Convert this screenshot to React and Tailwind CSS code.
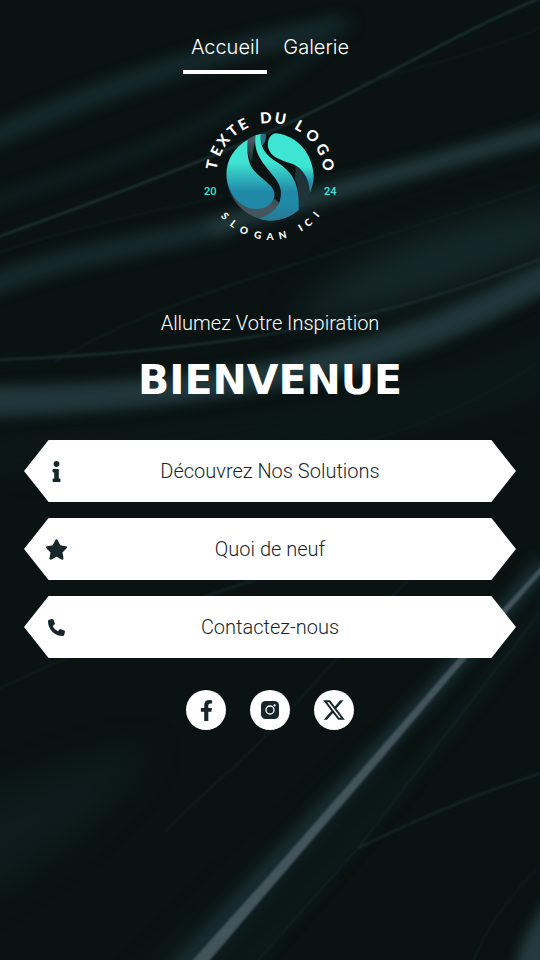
import { FaFacebookF, FaInfo } from 'react-icons/fa';
import { FaPhone, FaStar, FaXTwitter } from 'react-icons/fa6';

const navItems = [
  { label: 'Accueil', href: '#accueil', active: true },
  { label: 'Galerie', href: '#galerie', active: false },
];

const links = [
  { label: 'Découvrez Nos Solutions', href: '#solutions', icon: <FaInfo size={21} /> },
  { label: 'Quoi de neuf', href: '#nouveautes', icon: <FaStar size={23} /> },
  { label: 'Contactez-nous', href: '#contact', icon: <FaPhone size={17} /> },
];

function InstagramIcon() {
  return (
    <svg width="18" height="18" viewBox="0 0 18 18" aria-hidden="true">
      <rect width="18" height="18" rx="4.5" fill="currentColor" />
      <circle cx="9" cy="9" r="4" fill="none" stroke="#fff" strokeWidth="1.3" />
      <circle cx="13.6" cy="4.4" r="1.1" fill="#fff" />
    </svg>
  );
}

const socials = [
  { label: 'Facebook', href: '#facebook', icon: <FaFacebookF size={21} /> },
  { label: 'Instagram', href: '#instagram', icon: <InstagramIcon /> },
  { label: 'X', href: '#x', icon: <FaXTwitter size={24} /> },
];

// Advance widths in em for the letters used around the emblem
const glyphWidths = {
  A: 0.7, C: 0.66, D: 0.76, E: 0.59, G: 0.71, I: 0.31, L: 0.49,
  N: 0.75, O: 0.81, S: 0.57, T: 0.6, U: 0.73, X: 0.69, ' ': 0.2,
};

// Puts every glyph on a circle; angles are degrees from the vertical axis
function CircleText({ text, angles, radius, size, bottom }) {
  const xs = [];
  const ys = [];
  const turns = [];
  [...text].forEach((char, i) => {
    const a = (angles[i] * Math.PI) / 180;
    const turn = bottom ? -angles[i] : angles[i];
    const t = (turn * Math.PI) / 180;
    const half = (glyphWidths[char] * size) / 2;
    const y = bottom ? radius * Math.cos(a) : -radius * Math.cos(a);
    xs.push((80 + radius * Math.sin(a) - half * Math.cos(t)).toFixed(2));
    ys.push((77 + y - half * Math.sin(t)).toFixed(2));
    turns.push(turn);
  });
  return (
    <text
      x={xs.join(' ')}
      y={ys.join(' ')}
      rotate={turns.join(' ')}
      fontSize={size}
      className="fill-white font-[Lato,sans-serif] font-black"
    >
      {text}
    </text>
  );
}

function Logo() {
  return (
    <svg width="160" height="150" viewBox="0 0 160 150" role="img" aria-label="Texte du logo">
      <defs>
        <linearGradient id="lobe" gradientUnits="userSpaceOnUse" x1="0" y1="95" x2="0" y2="185">
          <stop offset="0" stopColor="#3fe5d3" />
          <stop offset="1" stopColor="#2089a8" />
        </linearGradient>
        <linearGradient id="lobeRight" gradientUnits="userSpaceOnUse" x1="0" y1="110" x2="0" y2="160">
          <stop offset="0" stopColor="#3fe5d3" />
          <stop offset="1" stopColor="#2089a8" />
        </linearGradient>
        <linearGradient id="ribbon" gradientUnits="userSpaceOnUse" x1="0" y1="30" x2="0" y2="100">
          <stop offset="0" stopColor="#465a61" />
          <stop offset="1" stopColor="#16272b" />
        </linearGradient>
        <linearGradient id="rim" gradientUnits="userSpaceOnUse" x1="0" y1="150" x2="0" y2="235">
          <stop offset="0" stopColor="#22373b" />
          <stop offset="1" stopColor="#46565d" />
        </linearGradient>
        <linearGradient id="stem" gradientUnits="userSpaceOnUse" x1="0" y1="225" x2="0" y2="272">
          <stop offset="0" stopColor="#2089a8" />
          <stop offset="1" stopColor="#2a7690" />
        </linearGradient>
      </defs>
      <g transform="translate(35 30) scale(0.3333)">
        <path d="M4 140 C8 195 45 250 105 266 C145 254 166 232 167 190 C160 165 148 190 140 212 C100 245 30 225 10 150 Z" fill="url(#rim)" />
        <path d="M150 182 C158 165 166 172 168 194 L164 220 C155 212 150 206 147 206 Z" fill="#0c1718" />
        <path d="M67 30 C76 22 86 17 96 14 C88 45 82 65 82 98 C70 82 66 62 67 30 Z" fill="url(#ribbon)" />
        <path d="M68 29 C20 56 -4 105 7 157 C18 203 52 237 93 237 C128 237 150 216 148 190 C146 163 110 151 84 118 C67 94 66 65 68 29 Z" fill="url(#lobe)" />
        <path d="M106 12 L121 11 C125 23 121 38 111 48 Z" fill="#2e6e86" />
        <path d="M92 16 L107 12 C104 50 120 76 160 99 C203 128 225 163 221 240 C187 267 147 279 103 266 C151 250 168 224 168 188 C167 151 130 127 107 88 C92 64 88 40 92 16 Z" fill="url(#lobe)" />
        <path d="M221 225 L221 240 C187 267 147 279 103 266 C130 257 147 245 157 228 Z" fill="url(#stem)" />
        <path d="M212 103 C240 115 255 145 258 160 L252 192 C246 212 234 229 221 238 C226 195 216 160 210 146 Z" fill="#203338" />
        <path d="M153 10 C218 17 264 72 266 139 C266 158 261 174 254 190 C256 158 240 119 205 103 C174 92 142 86 131 58 C124 36 133 12 153 10 Z" fill="url(#lobeRight)" />
      </g>
      <CircleText
        text="TEXTE DU LOGO"
        angles={[-78, -64, -52, -39, -27, -15, -4, 10, 20, 30, 46, 62, 78]}
        radius={54}
        size={15}
      />
      <CircleText
        text="SLOGAN ICI"
        angles={[-49, -38, -26, -12, 0, 12, 22, 31, 40, 51]}
        radius={63}
        size={10}
        bottom
      />
      <text x="14" y="95" fontSize="11" className="fill-[#3fe5d3] font-[Roboto,sans-serif] font-medium">20</text>
      <text x="134" y="95" fontSize="11" className="fill-[#3fe5d3] font-[Roboto,sans-serif] font-medium">24</text>
    </svg>
  );
}

function SilkBackground() {
  return (
    <svg
      className="absolute inset-0 size-full"
      viewBox="0 0 540 960"
      preserveAspectRatio="xMidYMid slice"
      fill="none"
      aria-hidden="true"
    >
      <defs>
        <filter id="blur1" x="-20%" y="-20%" width="140%" height="140%" colorInterpolationFilters="sRGB">
          <feGaussianBlur stdDeviation="0.8" />
        </filter>
        <filter id="blur6" x="-20%" y="-50%" width="140%" height="200%" colorInterpolationFilters="sRGB">
          <feGaussianBlur stdDeviation="6" />
        </filter>
        <filter id="blur14" x="-30%" y="-50%" width="160%" height="200%" colorInterpolationFilters="sRGB">
          <feGaussianBlur stdDeviation="16" />
        </filter>
      </defs>

      <g filter="url(#blur14)">
        <path d="M290 325 C340 265 430 220 580 200 L580 235 C490 275 400 310 290 325 Z" fill="#15272a" />
        <path d="M-40 810 C40 775 100 755 150 750 C110 810 50 860 -40 910 Z" fill="#0e1c1d" />
        <path d="M-40 445 C180 435 380 420 580 330 L580 370 C430 440 250 460 -40 465 Z" fill="#0c1919" />
        <path d="M380 760 C320 820 240 890 130 1000 L190 1000 L400 760 Z" fill="#0f1f21" />
      </g>

      <g filter="url(#blur6)">
        <path d="M-20 142 C90 95 190 55 340 26" stroke="#14272a" strokeWidth="22" />
        <path d="M-20 206 C140 152 230 130 350 20" stroke="#0f1f21" strokeWidth="12" />
        <path d="M-20 290 C60 255 150 245 230 224" stroke="#15282b" strokeWidth="22" />
        <path d="M210 228 C340 190 440 160 560 128" stroke="#20363a" strokeWidth="18" />
        <path d="M-20 386 C120 386 260 370 370 337 C440 315 500 286 560 254 L560 284 C480 330 400 364 300 384 C200 404 110 412 -20 418 Z" fill="#20363a" />
        <path d="M545 562 C420 710 290 845 165 985" stroke="#172b2f" strokeWidth="18" />
        <path d="M560 590 C450 730 340 860 230 985" stroke="#0d1a1b" strokeWidth="12" />
        <path d="M548 900 C532 920 516 950 511 985 L580 985 L580 880 Z" fill="#24393e" />
      </g>

      <g filter="url(#blur1)">
        <path d="M-5 238 C100 200 200 162 262 135 C370 88 440 40 545 -4" stroke="#1f363b" strokeWidth="2" />
        <path d="M-5 254 C180 190 400 180 545 112" stroke="#122325" strokeWidth="1" />
        <path d="M360 84 C430 64 490 50 545 26" stroke="#122325" strokeWidth="1" />
        <path d="M55 362 C150 300 320 260 545 184" stroke="#0e1e1f" strokeWidth="2" />
        <path d="M-5 360 C200 352 370 328 545 257" stroke="#1b3034" strokeWidth="2" />
        <path d="M330 452 C430 425 490 395 545 358" stroke="#122224" strokeWidth="1" />
        <path d="M-5 690 C20 680 40 668 70 658" stroke="#16292c" strokeWidth="1" />
        <path d="M205 597 C220 591 235 586 255 580" stroke="#14272a" strokeWidth="2" />
        <path d="M410 578 C360 630 310 690 265 737 C235 768 200 795 165 832" stroke="#1a3034" strokeWidth="1" />
        <path d="M545 562 L456 661 L355 777 L270 874 L181 973 L199 973 L278 880 L361 783 L460 666 L545 569 Z" fill="#43545b" />
        <path d="M545 606 L358 848 L245 975" stroke="#1a3034" strokeWidth="1" />
        <path d="M358 848 C400 828 470 795 545 772" stroke="#172a2d" strokeWidth="2" />
        <path d="M545 860 C500 905 480 940 470 970" stroke="#16292c" strokeWidth="1" />
      </g>
    </svg>
  );
}

export default function App() {
  return (
    <div className="relative min-h-screen overflow-hidden bg-[#0a1312] text-white">
      <SilkBackground />

      <div className="relative flex flex-col items-center px-6 pt-5">
        <nav className="flex justify-center gap-2 font-[Inter,sans-serif] text-xl leading-[54px] font-light">
          {navItems.map((item) => (
            <a
              key={item.label}
              href={item.href}
              aria-current={item.active ? 'page' : undefined}
              className={`h-[54px] border-b-4 px-2 ${
                item.active ? 'border-white' : 'border-transparent'
              }`}
            >
              {item.label}
            </a>
          ))}
        </nav>

        <div className="mt-[26px]">
          <Logo />
        </div>

        <main className="flex w-full flex-col items-center">
          <p className="mt-14 font-[Roboto,sans-serif] text-xl leading-[34px] font-light">
            Allumez Votre Inspiration
          </p>
          <h1 className="mt-4 font-['DejaVu_Sans',sans-serif] text-[41px] leading-12 font-bold">
            BIENVENUE
          </h1>

          <div className="mt-9 flex w-full flex-col gap-4">
            {links.map((link) => (
              <a
                key={link.label}
                href={link.href}
                className="grid h-[62px] grid-cols-[64px_1fr_64px] items-center bg-white text-[#15272b] [clip-path:polygon(5%_0,95%_0,100%_50%,95%_100%,5%_100%,0_50%)]"
              >
                <span className="flex justify-center">{link.icon}</span>
                <span className="text-center font-[Roboto,sans-serif] text-xl font-light">
                  {link.label}
                </span>
              </a>
            ))}
          </div>

          <div className="mt-8 flex gap-6">
            {socials.map((social) => (
              <a
                key={social.label}
                href={social.href}
                aria-label={social.label}
                className="flex size-10 items-center justify-center rounded-full bg-white text-[#15272b]"
              >
                {social.icon}
              </a>
            ))}
          </div>
        </main>
      </div>
    </div>
  );
}
